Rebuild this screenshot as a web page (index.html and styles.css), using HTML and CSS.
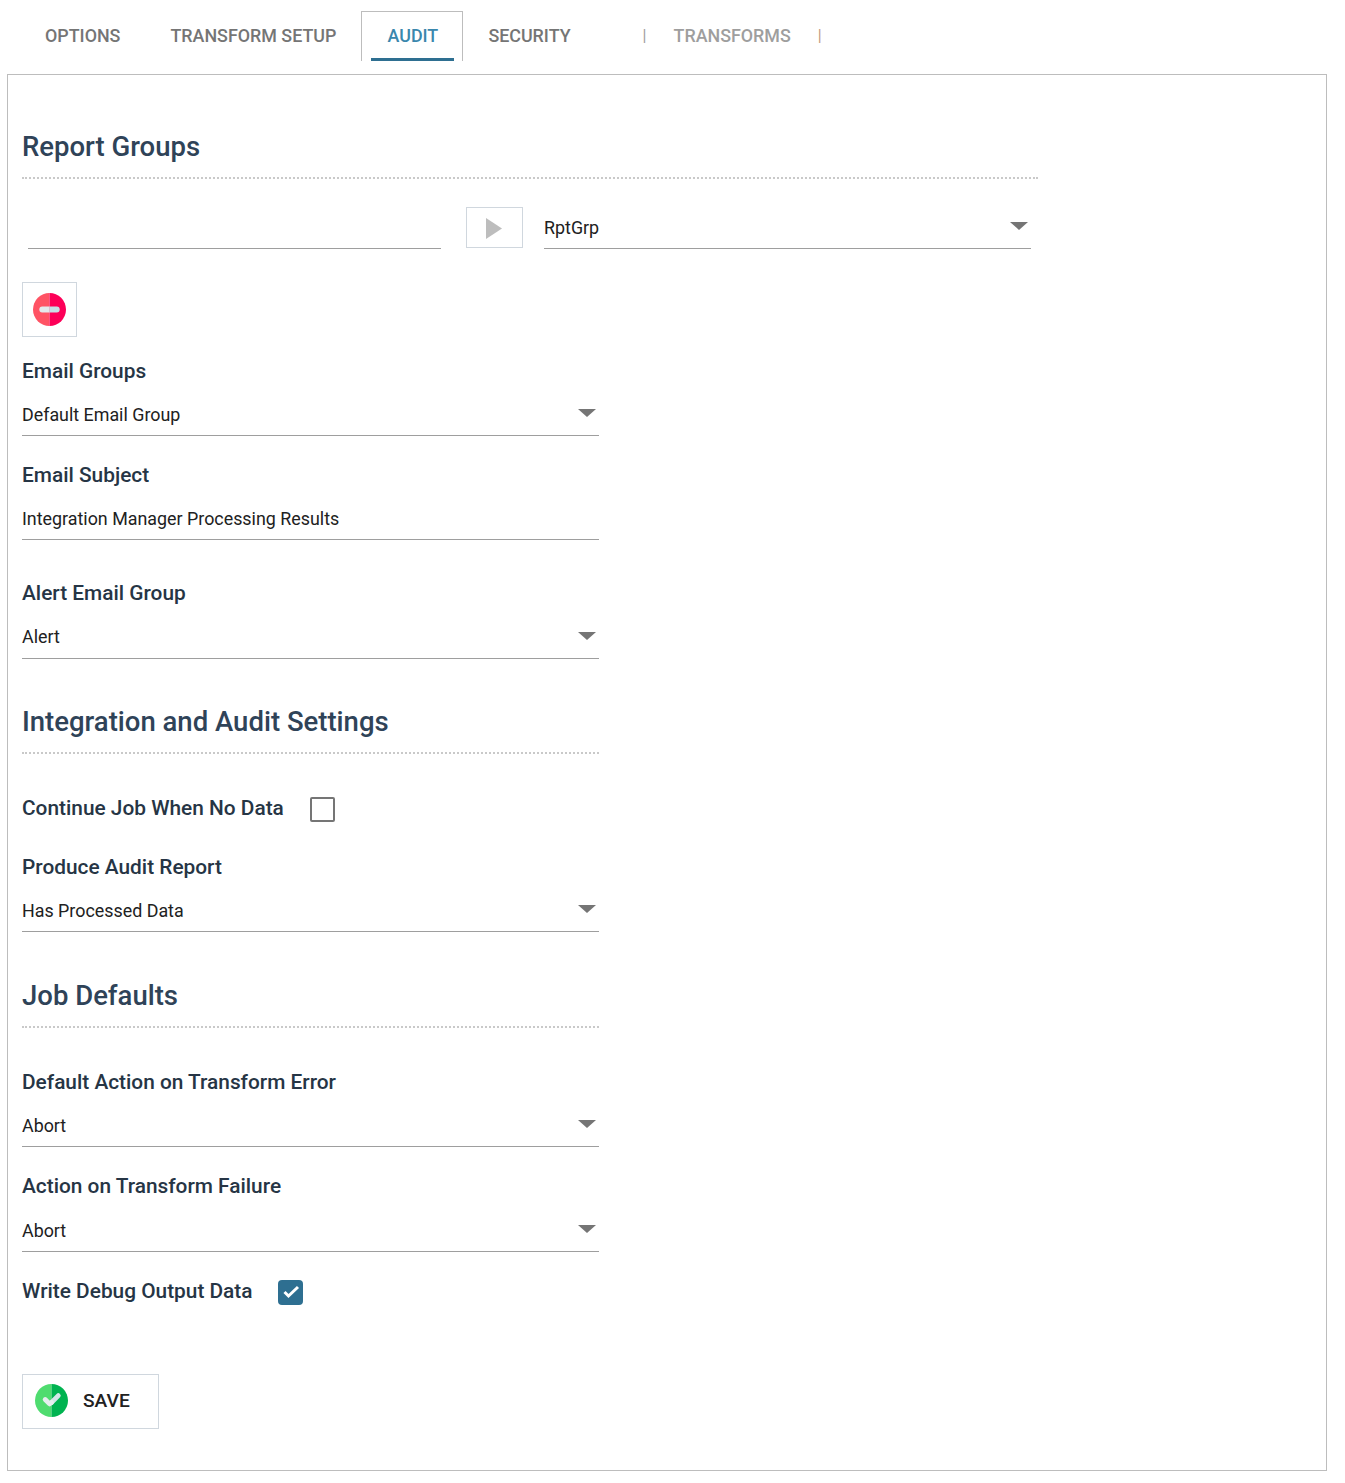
FILE: index.html
```html
<!DOCTYPE html>
<html lang="en">
<head>
    <meta charset="UTF-8">
    <meta name="viewport" content="width=device-width, initial-scale=1.0">
    <title>Audit</title>
    <link rel="stylesheet" href="styles.css">
</head>
<body>
    <nav class="tabs">
        <a class="tab tab-options">OPTIONS</a>
        <a class="tab tab-setup">TRANSFORM SETUP</a>
        <a class="tab tab-audit active"><span>AUDIT</span></a>
        <a class="tab tab-security">SECURITY</a>
        <span class="sep sep-first">|</span>
        <a class="tab tab-transforms">TRANSFORMS</a>
        <span class="sep sep-last">|</span>
    </nav>

    <div class="panel">
        <h2 class="title title-wide">Report Groups</h2>
        <div class="report-row">
            <div class="report-input"></div>
            <button class="play-btn">
                <svg width="16" height="21" viewBox="0 0 16 21"><polygon points="0,0 16,10.500 0,21" fill="#bdbdbd"/></svg>
            </button>
            <div class="select report-select">RptGrp<i class="caret"></i></div>
        </div>
        <button class="icon-btn remove-btn">
            <svg width="33" height="33" viewBox="0 0 34 34">
                <path d="M17 0a17 17 0 0 0 0 34z" fill="#ff5364"/>
                <path d="M17 0a17 17 0 0 1 0 34z" fill="#fd0058"/>
                <path d="M9.500 14h7.500v6h-7.500a3 3 0 0 1 0-6z" fill="#e4eaec"/>
                <path d="M17 14h7.500a3 3 0 0 1 0 6h-7.500z" fill="#c8e0e6"/>
            </svg>
        </button>

        <label class="label label-email">Email Groups</label>
        <div class="select">Default Email Group<i class="caret"></i></div>
        <label class="label label-subject">Email Subject</label>
        <div class="select">Integration Manager Processing Results</div>
        <label class="label label-alert">Alert Email Group</label>
        <div class="select select-alert">Alert<i class="caret"></i></div>

        <h2 class="title title-integration">Integration and Audit Settings</h2>
        <div class="check-row check-continue">
            <label class="label-inline">Continue Job When No Data</label>
            <span class="checkbox"></span>
        </div>
        <label class="label label-produce">Produce Audit Report</label>
        <div class="select">Has Processed Data<i class="caret"></i></div>

        <h2 class="title title-job">Job Defaults</h2>
        <label class="label label-error">Default Action on Transform Error</label>
        <div class="select">Abort<i class="caret"></i></div>
        <label class="label label-failure">Action on Transform Failure</label>
        <div class="select">Abort<i class="caret"></i></div>
        <div class="check-row check-debug">
            <label class="label-inline">Write Debug Output Data</label>
            <span class="checkbox checked">
                <svg width="25" height="25" viewBox="0 0 25 25"><path d="M6.500 12l4 4 9.500-9" fill="none" stroke="#fff" stroke-width="3"/></svg>
            </span>
        </div>

        <button class="icon-btn save-btn">
            <svg width="33" height="33" viewBox="0 0 34 34">
                <path d="M17 0a17 17 0 0 0 0 34z" fill="#4fdc6f"/>
                <path d="M17 0a17 17 0 0 1 0 34z" fill="#00b350"/>
                <path d="M17 19l7-7" fill="none" stroke="#d3e6e8" stroke-width="5" stroke-linecap="round"/>
                <path d="M10.500 16l4.500 4.500 2-1.500" fill="none" stroke="#e6eeef" stroke-width="5" stroke-linecap="round" stroke-linejoin="round"/>
            </svg>
            <span>SAVE</span>
        </button>
    </div>
</body>
</html>
```

FILE: styles.css
```css
* {
    box-sizing: border-box;
}
body {
    margin: 0;
    padding: 11px 18px 12px 7px;
    background: #fff;
    font-family: Roboto, sans-serif;
    color: #212121;
}
button {
    font-family: inherit;
    background: #fff;
    padding: 0;
}

/* tabs */
.tabs {
    display: flex;
    height: 63px;
    font-size: 17.870px;
    font-weight: 500;
    color: #757575;
}
.tab, .sep {
    height: 50px;
    line-height: 50px;
}
.tab-options {
    margin-left: 38px;
}
.tab-setup {
    margin-left: 50px;
}
.tab-audit {
    margin-left: 25px;
    width: 102px;
    padding: 0 8px 0 9px;
    border: 1px solid #bdbdbd;
    border-bottom: 0;
    color: #3a87ad;
    text-align: center;
}
.tab-audit span {
    display: block;
    height: 49px;
    line-height: 48px;
    border-bottom: 3px solid #2e6f91;
}
.tab-security {
    margin-left: 25px;
}
.sep-first {
    margin-left: 72px;
    color: #9e9e9e;
    font-weight: 400;
    font-size: 16px;
}
.tab-transforms {
    margin-left: 27px;
    color: #9e9e9e;
}
.sep-last {
    margin-left: 27px;
    color: #c29a80;
    font-weight: 400;
    font-size: 16px;
}

/* panel */
.panel {
    width: 1320px;
    height: 1397px;
    border: 1px solid #bdbdbd;
    padding: 0 14px;
}
.title {
    margin: 0;
    width: 577px;
    height: 50px;
    border-bottom: 2px dotted #c9c9c9;
    font-size: 27.500px;
    font-weight: 500;
    line-height: 36px;
    color: #2f4358;
}
.title-wide {
    width: 1016px;
    margin-top: 54px;
}
.title-integration {
    margin-top: 45px;
}
.title-job {
    margin-top: 46px;
}

.report-row {
    display: flex;
    align-items: flex-end;
    margin-top: 28px;
}
.report-input {
    width: 413px;
    height: 42px;
    margin-left: 6px;
    border-bottom: 1px solid #9e9e9e;
}
.play-btn {
    display: flex;
    align-items: center;
    justify-content: center;
    width: 57px;
    height: 41px;
    margin-left: 25px;
    margin-bottom: 1px;
    padding: 2px 2px 0 0;
    border: 1px solid #d0d7de;
}
.report-select {
    width: 487px;
    margin-left: 21px;
}

.select {
    position: relative;
    height: 42px;
    line-height: 41px;
    border-bottom: 1px solid #9e9e9e;
    width: 577px;
    font-size: 17.870px;
}
.report-select.select {
    width: 487px;
}
.select-alert {
    height: 43px;
}
.caret {
    position: absolute;
    right: 3px;
    top: 15px;
    border-left: 9px solid transparent;
    border-right: 9px solid transparent;
    border-top: 8px solid #757575;
}
.select-alert .caret {
    top: 16px;
}

.icon-btn {
    display: flex;
    align-items: center;
    border: 1px solid #d0d7de;
}
.remove-btn {
    justify-content: center;
    width: 55px;
    height: 55px;
    margin-top: 33px;
}
.save-btn {
    width: 137px;
    height: 55px;
    margin-top: 69px;
    padding: 0 0 3px 12px;
    font-size: 19.200px;
    font-weight: 500;
    color: #212121;
}
.save-btn span {
    margin-left: 15px;
}

.label, .label-inline {
    font-size: 20.850px;
    font-weight: 500;
    line-height: 28px;
    color: #263545;
}
.label {
    display: block;
    height: 43px;
    padding-top: 6px;
}
.label-email {
    margin-top: 14px;
}
.label-subject {
    margin-top: 19px;
}
.label-alert {
    margin-top: 33px;
}
.label-produce {
    margin-top: 25px;
}
.label-error {
    margin-top: 34px;
}
.label-failure {
    margin-top: 19px;
    height: 44px;
}

.check-row {
    display: flex;
    align-items: center;
    height: 28px;
}
.check-continue {
    margin-top: 40px;
}
.check-debug {
    margin-top: 25px;
}
.checkbox {
    width: 25px;
    height: 25px;
    margin-top: 2px;
    margin-left: 26px;
    border: 2px solid #757575;
    border-radius: 2px;
    flex: none;
}
.check-debug .checkbox {
    margin-left: 25px;
}
.checkbox.checked {
    border: 0;
    border-radius: 4px;
    background: #2e6f91;
}
.checkbox svg {
    display: block;
}
```
